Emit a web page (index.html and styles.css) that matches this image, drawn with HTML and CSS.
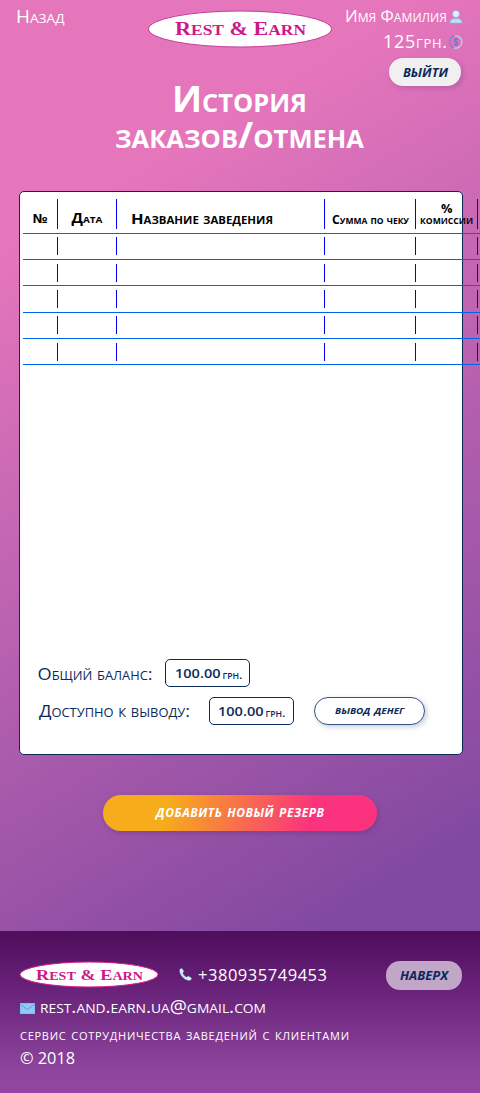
FILE: index.html
```html
<!DOCTYPE html>
<html lang="ru">
<head>
<meta charset="utf-8">
<title>Rest &amp; Earn</title>
<link rel="stylesheet" href="styles.css">
</head>
<body>
<div class="page">
  <header class="header">
    <a class="back"><svg class="label" width="50" height="26"><text x="0" y="18" textLength="48.500" lengthAdjust="spacingAndGlyphs" font-size="18">Назад</text></svg></a>
    <svg class="logo" width="186" height="38" viewBox="0 0 186 38">
      <ellipse cx="93" cy="19" rx="91.500" ry="18" fill="#fff" stroke="#c43a97"/>
      <text class="logo-text" x="28" y="25" textLength="131" lengthAdjust="spacingAndGlyphs" font-size="18.500">R<tspan font-size="14.500">EST</tspan> &amp; E<tspan font-size="14.500">ARN</tspan></text>
    </svg>
    <div class="account">
      <div class="account-row">
        <svg class="label" width="103" height="26"><text x="0" y="17" textLength="102" lengthAdjust="spacingAndGlyphs" font-size="16.500">Имя Фамилия</text></svg>
        <svg class="icon" width="14" height="14" viewBox="0 0 14 14"><circle cx="7" cy="4" r="3.300" fill="#dff3ff" stroke="#9bcbee" stroke-width=".7"/><path d="M1 13c.3-3 2-4.300 4-4.300h4c2 0 3.700 1.300 4 4.300z" fill="#b9e0fb" stroke="#8fc3ea" stroke-width=".6"/></svg>
      </div>
      <div class="account-row">
        <svg class="label" width="65" height="26"><text x="0" y="18" textLength="64" font-size="18">125грн.</text></svg>
        <svg class="icon" width="14" height="14" viewBox="0 0 14 14"><path d="M6 .8A6.200 6.200 0 1 1 5 12.900" fill="none" stroke="#b9daf5" stroke-width="1.200"/><path d="M4.500 12.700A6.200 6.200 0 0 1 5 1" fill="none" stroke="#647fc9" stroke-width="1.400" stroke-dasharray="1.400 1.200"/><path d="M8.700 4.700C7.500 3.700 5.300 4 5.300 5.500S8.700 7 8.700 8.600 6.300 10.300 5 9.200M7 3v8" fill="none" stroke="#5b82c8" stroke-width="1.100"/></svg>
      </div>
      <button class="pill exit"><svg class="label heavy" width="46" height="24"><text x="1" y="17" textLength="45" lengthAdjust="spacingAndGlyphs" font-size="18">выйти</text></svg></button>
    </div>
  </header>

  <h1 class="title">
    <svg class="label heading" width="252" height="78"><text x="58" y="31" textLength="135" lengthAdjust="spacingAndGlyphs" font-size="36">История</text><text x="1" y="67" textLength="249" lengthAdjust="spacingAndGlyphs" font-size="36">заказов/отмена</text></svg>
  </h1>

  <main class="panel">
    <div class="table">
      <div class="row head">
        <div class="cell"><svg class="label bold" width="34" height="30"><text x="9.500" y="24" textLength="15" lengthAdjust="spacingAndGlyphs" font-size="12.500">№</text></svg></div>
        <div class="cell"><svg class="label bold" width="58" height="30"><text x="13.500" y="24" textLength="31" lengthAdjust="spacingAndGlyphs" font-size="13.500">Дата</text></svg></div>
        <div class="cell"><svg class="label bold" width="207" height="30"><text x="14" y="25" textLength="142" lengthAdjust="spacingAndGlyphs" font-size="14.500">Название заведения</text></svg></div>
        <div class="cell"><svg class="label bold" width="90" height="30"><text x="7" y="25" textLength="77" lengthAdjust="spacingAndGlyphs" font-size="11.500">Сумма по чеку</text></svg></div>
        <div class="cell"><svg class="label bold" width="61" height="30"><text x="25" y="14" textLength="11.500" lengthAdjust="spacingAndGlyphs" font-size="11.500">%</text><text x="4" y="25" textLength="53" lengthAdjust="spacingAndGlyphs" font-size="12">комиссии</text></svg></div>
      </div>
      <div class="row"><div class="cell"></div><div class="cell"></div><div class="cell"></div><div class="cell"></div><div class="cell"></div></div>
      <div class="row"><div class="cell"></div><div class="cell"></div><div class="cell"></div><div class="cell"></div><div class="cell"></div></div>
      <div class="row"><div class="cell"></div><div class="cell"></div><div class="cell"></div><div class="cell"></div><div class="cell"></div></div>
      <div class="row"><div class="cell"></div><div class="cell"></div><div class="cell"></div><div class="cell"></div><div class="cell"></div></div>
      <div class="row"><div class="cell"></div><div class="cell"></div><div class="cell"></div><div class="cell"></div><div class="cell"></div></div>
    </div>
    <div class="balances">
      <div class="balance total">
        <svg class="label navy" width="127" height="28"><text x="-.5" y="21" textLength="115" lengthAdjust="spacingAndGlyphs" font-size="17">Общий баланс:</text></svg>
        <div class="amount"><svg class="label semi" width="83" height="26"><text x="9" y="18" textLength="45.500" lengthAdjust="spacingAndGlyphs" font-size="13">100.00</text><text x="56.500" y="19" textLength="20" lengthAdjust="spacingAndGlyphs" font-size="11.500">грн.</text></svg></div>
      </div>
      <div class="balance available">
        <svg class="label navy" width="170" height="28"><text x="0" y="20" textLength="151" lengthAdjust="spacingAndGlyphs" font-size="17">Доступно к выводу:</text></svg>
        <div class="amount"><svg class="label semi" width="83" height="26"><text x="8" y="18" textLength="45.500" lengthAdjust="spacingAndGlyphs" font-size="13">100.00</text><text x="55.500" y="19" textLength="20" lengthAdjust="spacingAndGlyphs" font-size="11.500">грн.</text></svg></div>
        <button class="withdraw"><svg class="label heavy" width="72" height="20"><text x="1" y="13" textLength="69" lengthAdjust="spacingAndGlyphs" font-size="13">вывод денег</text></svg></button>
      </div>
    </div>
  </main>

  <button class="add"><svg class="label heavy light" width="170" height="24"><text x="1" y="16" textLength="168" font-size="16.500">добавить новый резерв</text></svg></button>

  <footer class="footer">
    <div class="contacts">
      <svg class="logo-small" width="140" height="27" viewBox="0 0 140 27">
        <ellipse cx="70" cy="13.500" rx="69" ry="12.500" fill="#fff" stroke="#dc1a8e"/>
        <text class="logo-text" x="17" y="18.500" textLength="107" lengthAdjust="spacingAndGlyphs" font-size="15.500">R<tspan font-size="12">EST</tspan> &amp; E<tspan font-size="12">ARN</tspan></text>
      </svg>
      <svg class="phone" width="13" height="13" viewBox="0 0 13 13"><path d="M.8 2C1 .9 2.600.400 3.400 1L4.600 3.500 3.500 5c.8 2.100 2.200 3.600 4.200 4.300L9.300 8.300 12.300 10c.3 1.200-.6 2.300-1.800 2.300C5.500 12.300.500 7 .8 2z" fill="#d6f2ff" stroke="#9fd0ec" stroke-width=".6"/></svg>
      <svg class="label" width="132" height="28"><text x="0" y="20" textLength="129" font-size="16.500">+380935749453</text></svg>
      <button class="pill top"><svg class="label heavy" width="50" height="24"><text x="1" y="16" textLength="48" lengthAdjust="spacingAndGlyphs" font-size="18">наверх</text></svg></button>
    </div>
    <div class="mail">
      <svg width="15" height="11" viewBox="0 0 15 11"><path fill="#90caf9" d="M0 0h15v11H0z"/><path d="M0 1l7.500 5.500L15 1" fill="none" stroke="#6299c5"/><path d="M.5.5h14v10H.5z" fill="none" stroke="#7bb8ea" stroke-width=".7"/></svg>
      <svg class="label" width="228" height="28"><text x="0" y="19" textLength="226" lengthAdjust="spacingAndGlyphs" font-size="18">rest.and.earn.ua@gmail.com</text></svg>
    </div>
    <svg class="label service" width="332" height="24"><text x="0" y="17" textLength="329" font-size="16">сервис сотрудничества заведений с клиентами</text></svg>
    <svg class="label copy" width="58" height="24"><text x="0" y="17" textLength="55" lengthAdjust="spacingAndGlyphs" font-size="16">© 2018</text></svg>
  </footer>
</div>
</body>
</html>
```
FILE: styles.css
```css
* { box-sizing: border-box; }
body { margin: 0; font-family: "Open Sans", sans-serif; }
svg { display: block; flex: none; }
button { padding: 0; border: 0; display: flex; align-items: center; justify-content: center; }
.page {
  width: 480px; height: 1093px; overflow: hidden;
  display: flex; flex-direction: column;
  background: linear-gradient(149deg, #e676bc 18%, #8048a0 82%);
}
.label { overflow: visible; }
.label text { font-family: "Open Sans", sans-serif; font-variant: small-caps; fill: #fff; }
.label.bold text { font-weight: 700; fill: #000; }
.label.heading text { font-weight: 700; }
.label.semi text { font-weight: 600; }
.label.navy text { fill: #0b2a5b; }
.label.heavy text { font-weight: 750; font-style: italic; fill: #0b2a5b; }
.label.heavy.light text { font-weight: 700; fill: #fff; }
.logo-text { font-family: "Liberation Serif", serif; font-weight: 700; fill: #d01788; }
.header { height: 86px; flex: none; display: grid; grid-template-columns: 131px 186px 146px; }
.back { padding: 5px 0 0 16px; }
.header .logo { margin: 9.500px 0 0 16px; }
.account { display: flex; flex-direction: column; align-items: flex-end; padding-top: 5px; }
.account-row { display: flex; gap: 1px; height: 25px; }
.icon { margin-top: 5px; }
.pill { border-radius: 14px; background: #f2eff0; }
.exit { width: 72px; height: 28px; margin: 3px 2px 0 0; box-shadow: 2px 2px 5px #60307044; }
.title { margin: -5px 0 0; width: 252px; align-self: center; height: 78px; flex: none; }
.panel {
  width: 444px; height: 564px; flex: none; margin: 32px 0 0 19px;
  background: #fff; border: 1px solid #0b2a5b; border-radius: 5px;
  display: flex; flex-direction: column; justify-content: space-between;
}
.table { width: 517px; margin-left: 3px; }
.row {
  display: grid; grid-template-columns: 35px 59px 208px 91px 62px;
  height: 26.300px; padding-top: 3.600px; border-bottom: 1px solid #0066e8;
}
.row.head { height: 41.800px; padding-top: 7px; }
.cell { height: 18px; border-right: 1px solid #0000ee; }
.head .cell { height: 30px; }
.balances { display: flex; flex-direction: column; gap: 10px; padding: 0 0 29px 18px; }
.balance { display: flex; height: 28px; }
.available { padding-left: 1px; }
.amount { width: 85px; height: 28px; border: 1px solid #0b2a5b; border-radius: 5px; }
.amount .label text { fill: #0b2a5b; }
.withdraw {
  width: 111px; height: 28px; margin-left: 20px; background: #fff;
  border: 1px solid #345486; border-radius: 14px; box-shadow: 2px 2px 5px #2b3e7040;
}
.add {
  width: 274px; height: 36px; flex: none; align-self: center; margin: 40px 0 0; border-radius: 18px;
  background: linear-gradient(105deg, #f6ac1b 24%, #fb327d 76%);
  box-shadow: 1px 2px 5px #40205044;
}
.footer {
  height: 162px; flex: none; margin-top: 100px; padding: 30px 18px 0 20px;
  background: linear-gradient(#4f0e5c, #682279 35%, #8d449c 85%, #9246a0);
}
.contacts { display: flex; height: 32px; margin-left: -1px; }
.phone { margin: 7px 6px 0 20px; }
.top { width: 76px; height: 29px; margin-left: auto; background: #c1a6c7; }
.mail { display: flex; gap: 5px; height: 30px; align-items: center; }
```
